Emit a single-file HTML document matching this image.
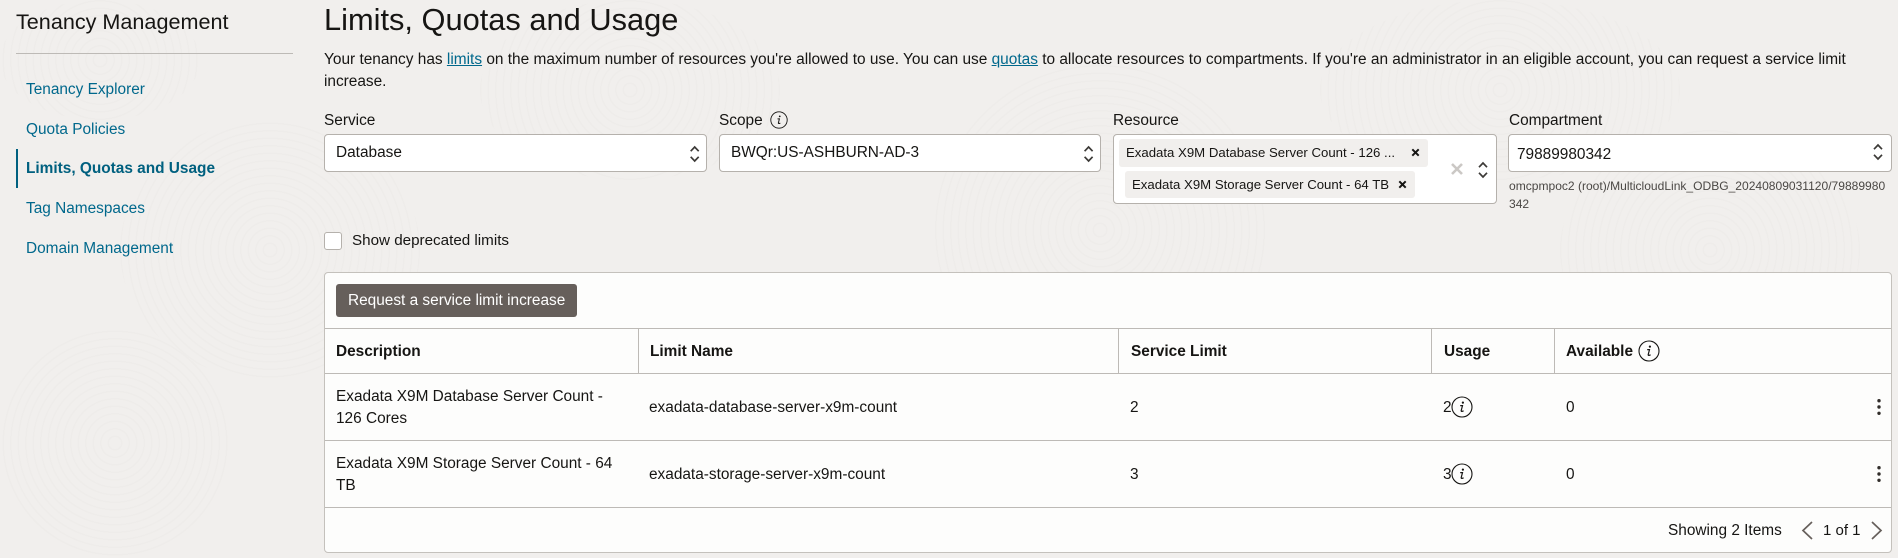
<!DOCTYPE html>
<html><head><meta charset="utf-8"><title>Limits, Quotas and Usage</title>
<style>
html,body{margin:0;padding:0;width:1898px;height:558px;overflow:hidden;background:#f1efed}
body{position:relative;font-family:"Liberation Sans",Arial,sans-serif;font-size:15.4px;color:#161513}
.t{position:absolute;white-space:nowrap;height:22px;line-height:22px}
.nav{color:#00688c}
a{color:#00688c;text-decoration:underline}
.box{position:absolute;box-sizing:border-box;background:#fff;border:1px solid #b5b1ac;border-radius:4px}
.chip{position:absolute;background:#f1efed;border-radius:3px}
.line{position:absolute;background:#bdbab6}
#bg{position:absolute;left:0;top:0;width:1898px;height:558px;overflow:hidden}
.ring{position:absolute;border-radius:50%;background:repeating-radial-gradient(circle,rgba(120,110,100,0) 0 6px,rgba(120,110,100,.025) 6px 7.5px)}
b{font-weight:700}
</style></head><body>
<div id="bg">
<div class="ring" style="left:930px;top:60px;width:340px;height:340px"></div>
<div class="ring" style="left:1320px;top:0;width:360px;height:180px"></div>
<div class="ring" style="left:1560px;top:130px;width:300px;height:240px"></div>
<div class="ring" style="left:120px;top:120px;width:300px;height:260px"></div>
<div class="ring" style="left:0;top:330px;width:230px;height:226px"></div>
<div class="ring" style="left:480px;top:0;width:300px;height:180px"></div>
<div class="ring" style="left:0;top:0;width:200px;height:120px"></div>
</div>

<div class="t" style="left:16px;top:11px;font-size:21.6px;line-height:22px">Tenancy Management</div>
<div class="line" style="left:16px;top:53px;width:277px;height:1px"></div>
<div class="t nav" style="left:26px;top:79px">Tenancy Explorer</div>
<div class="t nav" style="left:26px;top:119px">Quota Policies</div>
<div class="t nav" style="left:26px;top:158px;font-weight:700;color:#00607f">Limits, Quotas and Usage</div>
<div style="position:absolute;left:16px;top:149px;width:2px;height:39px;background:#00607f"></div>
<div class="t nav" style="left:26px;top:198px">Tag Namespaces</div>
<div class="t nav" style="left:26px;top:238px">Domain Management</div>

<div class="t" style="left:324px;top:3px;font-size:30.8px;height:34px;line-height:34px">Limits, Quotas and Usage</div>
<div class="t" style="left:324px;top:49px;font-size:15.43px">Your tenancy has <a>limits</a> on the maximum number of resources you're allowed to use. You can use <a>quotas</a> to allocate resources to compartments. If you're an administrator in an eligible account, you can request a service limit</div>
<div class="t" style="left:324px;top:71px">increase.</div>

<div class="t" style="left:324px;top:110px">Service</div>
<div class="t" style="left:719px;top:110px">Scope</div>
<div class="t" style="left:1113px;top:110px">Resource</div>
<div class="t" style="left:1509px;top:110px">Compartment</div>

<div class="box" style="left:324px;top:134px;width:383px;height:38px"></div>
<div class="t" style="left:336px;top:142px">Database</div>
<div class="box" style="left:719px;top:134px;width:382px;height:38px"></div>
<div class="t" style="left:731px;top:142px">BWQr:US-ASHBURN-AD-3</div>
<div class="box" style="left:1113px;top:134px;width:384px;height:70px"></div>
<div class="chip" style="left:1119px;top:139px;width:309px;height:28px"></div>
<div class="chip" style="left:1125px;top:171px;width:290px;height:27px"></div>
<div class="t" style="left:1126px;top:142px;font-size:13.2px">Exadata X9M Database Server Count - 126 ...</div>
<div class="t" style="left:1132px;top:174px;font-size:13.2px">Exadata X9M Storage Server Count - 64 TB</div>
<div class="box" style="left:1508px;top:134px;width:384px;height:38px"></div>
<div class="t" style="left:1517px;top:144px">79889980342</div>
<div class="t" style="left:1509px;top:175px;font-size:12.05px;color:#4a4744">omcpmpoc2 (root)/MulticloudLink_ODBG_20240809031120/79889980</div>
<div class="t" style="left:1509px;top:193px;font-size:12.05px;color:#4a4744">342</div>

<div class="box" style="left:324px;top:232px;width:18px;height:18px;border-radius:3px"></div>
<div class="t" style="left:352px;top:230px;font-size:15.2px">Show deprecated limits</div>

<div class="box" style="left:324px;top:272px;width:1568px;height:281px;background:#fdfdfc;border-color:#c4c1bc"></div>
<div style="position:absolute;left:336px;top:284px;width:241px;height:33px;background:#665f5b;border-radius:3px"></div>
<div class="t" style="left:348px;top:290px;color:#fff">Request a service limit increase</div>

<div class="line" style="left:325px;top:328px;width:1566px;height:1px"></div>
<div class="line" style="left:325px;top:373px;width:1566px;height:1px"></div>
<div class="line" style="left:325px;top:440px;width:1566px;height:1px"></div>
<div class="line" style="left:325px;top:507px;width:1566px;height:1px"></div>
<div class="line" style="left:638px;top:329px;width:1px;height:44px"></div>
<div class="line" style="left:1118px;top:329px;width:1px;height:44px"></div>
<div class="line" style="left:1431px;top:329px;width:1px;height:44px"></div>
<div class="line" style="left:1554px;top:329px;width:1px;height:44px"></div>

<div class="t" style="left:336px;top:341px"><b>Description</b></div>
<div class="t" style="left:650px;top:341px"><b>Limit Name</b></div>
<div class="t" style="left:1131px;top:341px"><b>Service Limit</b></div>
<div class="t" style="left:1444px;top:341px"><b>Usage</b></div>
<div class="t" style="left:1566px;top:341px"><b>Available</b></div>

<div class="t" style="left:336px;top:386px">Exadata X9M Database Server Count -</div>
<div class="t" style="left:336px;top:408px">126 Cores</div>
<div class="t" style="left:649px;top:397px">exadata-database-server-x9m-count</div>
<div class="t" style="left:1130px;top:397px">2</div>
<div class="t" style="left:1443px;top:397px">2</div>
<div class="t" style="left:1566px;top:397px">0</div>

<div class="t" style="left:336px;top:453px">Exadata X9M Storage Server Count - 64</div>
<div class="t" style="left:336px;top:475px">TB</div>
<div class="t" style="left:649px;top:464px">exadata-storage-server-x9m-count</div>
<div class="t" style="left:1130px;top:464px">3</div>
<div class="t" style="left:1443px;top:464px">3</div>
<div class="t" style="left:1566px;top:464px">0</div>

<div class="t" style="left:1668px;top:520px">Showing 2 Items</div>
<div class="t" style="left:1823px;top:520px;font-size:15px">1 of 1</div>

<svg width="1898" height="558" style="position:absolute;left:0;top:0;pointer-events:none" fill="none">
<defs>
<g id="inf"><circle r="10" stroke="#161513" stroke-width="1.1"/><path d="M-1.8 -1.4H.5L-.8 3.6Q-1 5 1.6 3.8" stroke="#161513" stroke-width="1.2"/><circle cx=".9" cy="-4.4" r="1.1" fill="#161513"/></g>
<g id="ud" stroke="#3c3a37" stroke-width="1.7"><path d="M-4 -2.8L0 -7L4 -2.8"/><path d="M-4 2.8L0 7L4 2.8"/></g>
<g id="x" stroke="#161513" stroke-width="2"><path d="M-3.2 -3.2L3.2 3.2M3.2 -3.2L-3.2 3.2"/></g>
<g id="k" fill="#312d2a"><circle cy="-6.3" r="1.7"/><circle r="1.7"/><circle cy="6.3" r="1.7"/></g>
</defs>
<use href="#inf" transform="translate(779 120) scale(.82)"/>
<use href="#inf" transform="translate(1649 351)"/>
<use href="#inf" transform="translate(1462 407)"/>
<use href="#inf" transform="translate(1462 474)"/>
<use href="#ud" transform="translate(694.7 154)"/>
<use href="#ud" transform="translate(1088.6 154)"/>
<use href="#ud" transform="translate(1878 152)"/>
<use href="#ud" transform="translate(1483 170)"/>
<use href="#x" transform="translate(1415.5 152.5)"/>
<use href="#x" transform="translate(1402.5 184.5)"/>
<path d="M1452 164L1462 174M1462 164L1452 174" stroke="#cbc8c5" stroke-width="2.6"/>
<use href="#k" transform="translate(1879 407)"/>
<use href="#k" transform="translate(1879 474)"/>
<path d="M1812 522L1803 530.5L1812 539" stroke="#665f5b" stroke-width="1.7"/>
<path d="M1872 522L1881 530.5L1872 539" stroke="#665f5b" stroke-width="1.7"/>
</svg>
</body></html>
